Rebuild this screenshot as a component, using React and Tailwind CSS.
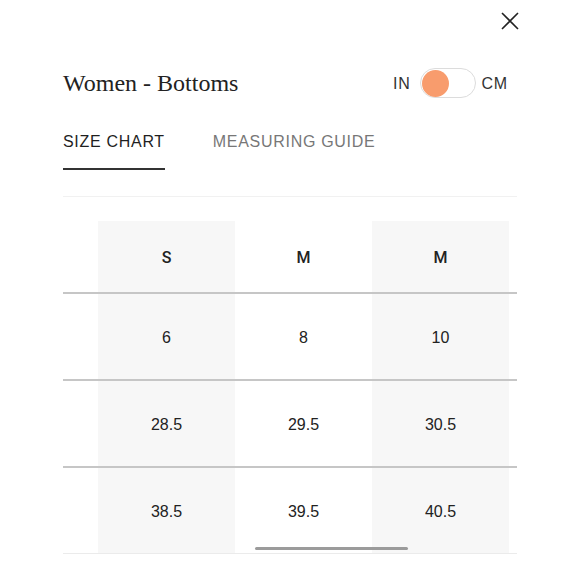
import React, { useState } from "react";

const sizes = ["S", "M", "M"];
const rows = [
    ["6", "8", "10"],
    ["28.5", "29.5", "30.5"],
    ["38.5", "39.5", "40.5"],
];

const sans = "font-['Liberation_Sans',Arial,sans-serif]";

const App = () => {
    const [metric, setMetric] = useState(false);
    const [tab, setTab] = useState("chart");

    return (
        <div className={`relative w-[580px] h-[580px] overflow-hidden bg-white ${sans}`}>
            {/* Close */}
            <div className="flex justify-end pt-[12px] pr-[61px]">
                <button className="w-[18px] h-[18px] text-[#222]">
                    <svg viewBox="0 0 18 18" width="18" height="18" fill="none" stroke="currentColor" strokeWidth="1.6">
                        <path d="M1 1 L17 17 M17 1 L1 17" />
                    </svg>
                </button>
            </div>

            {/* Title + unit toggle */}
            <div className="flex items-center justify-between pl-[63px] pr-[72px] mt-[38px] h-[30px]">
                <h2 className="font-['Liberation_Serif','Times_New_Roman',serif] text-[24px] leading-none text-[#222]">
                    Women - Bottoms
                </h2>
                <div className="flex items-center text-[16px] tracking-[0.8px] text-[#333]">
                    <span className="pt-[2px]">IN</span>
                    <button
                        onClick={() => setMetric(!metric)}
                        className={`ml-[9px] mr-[6px] w-[56px] h-[30px] rounded-full border border-[#dcdcdc] bg-white flex items-center px-[1px] ${metric ? "justify-end" : "justify-start"}`}
                    >
                        <span className="block w-[27px] h-[27px] rounded-full bg-[#f89c6d]" />
                    </button>
                    <span className="pt-[2px]">CM</span>
                </div>
            </div>

            {/* Tabs */}
            <div className="flex gap-[48px] pl-[63px] mt-[32px] text-[16px] tracking-[0.7px]">
                <button
                    onClick={() => setTab("chart")}
                    className={`pb-[14px] border-b-2 ${tab === "chart" ? "border-[#333] text-[#1f1f1f]" : "border-transparent text-[#777]"}`}
                >
                    SIZE CHART
                </button>
                <button
                    onClick={() => setTab("guide")}
                    className={`pb-[14px] border-b-2 ${tab === "guide" ? "border-[#333] text-[#1f1f1f]" : "border-transparent text-[#777]"}`}
                >
                    MEASURING GUIDE
                </button>
            </div>

            <div className="ml-[63px] w-[454px] mt-[26px] h-px bg-[#f1f1f1]" />

            {/* Table */}
            <div className="ml-[63px] w-[454px] mt-[24px] text-[16px] text-[#222]">
                <div className="flex h-[73px] border-b-2 border-[#c6c6c6]">
                    <div className="w-[35px]" />
                    {sizes.map((s, i) => (
                        <div
                            key={i}
                            className={`w-[137px] flex items-center justify-center pt-[2px] font-['Roboto',sans-serif] font-medium ${i !== 1 ? "bg-[#f7f7f7]" : ""}`}
                        >
                            {s}
                        </div>
                    ))}
                </div>
                {rows.map((r, ri) => (
                    <div
                        key={ri}
                        className={`flex ${ri === rows.length - 1 ? "h-[86px] border-b border-[#ebebeb]" : "h-[87px] border-b-2 border-[#c6c6c6]"}`}
                    >
                        <div className="w-[35px]" />
                        {r.map((v, i) => (
                            <div
                                key={i}
                                className={`w-[137px] flex items-center justify-center pt-[2px] ${i !== 1 ? "bg-[#f7f7f7]" : ""}`}
                            >
                                {v}
                            </div>
                        ))}
                    </div>
                ))}
            </div>

            {/* Scroll indicator */}
            <div className="absolute left-[255px] top-[547px] w-[153px] h-[3px] rounded-full bg-[#9b9b9b]" />
        </div>
    );
};

export default App;
